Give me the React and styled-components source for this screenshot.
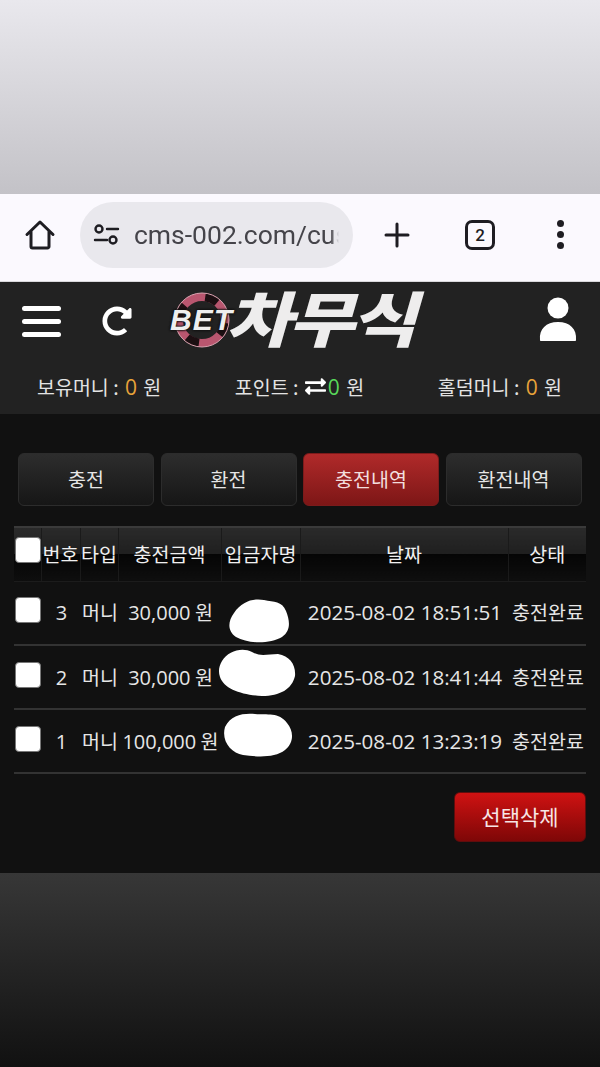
import React from 'react';
import styled, { createGlobalStyle } from 'styled-components';
import { FaExchangeAlt, FaRedoAlt } from 'react-icons/fa';

const korean = '"Noto Sans CJK KR", "Noto Sans", sans-serif';
const latin = '"Open Sans", "Noto Sans CJK KR", sans-serif';

const rows = [
  { id: 3, amount: '30,000', date: '2025-08-02 18:51:51', blob: 'M6 14C14 2 26 -1 36 1C46 3 54 2 58 12C62 22 63 32 54 38C42 45 20 45 8 38C-1 32 0 22 6 14Z', w: 62, h: 44, left: 7, top: -14 },
  { id: 2, amount: '30,000', date: '2025-08-02 18:41:44', blob: 'M4 12C10 2 24 -2 34 3C42 8 50 5 60 5C72 7 78 16 77 27C74 40 62 47 44 47C24 46 6 40 2 28C0 22 1 17 4 12Z', w: 78, h: 48, left: -3, top: -28 },
  { id: 1, amount: '100,000', date: '2025-08-02 13:23:19', blob: 'M2 14C8 2 20 0 32 1C44 2 56 -1 64 10C71 18 71 30 62 37C52 45 34 44 20 42C8 40 -2 28 2 14Z', w: 70, h: 44, left: 2, top: -28 },
];

const App = () => {
  return (
    <Page>
      <GlobalStyle />
      <TopBlank />
      <BrowserBar>
        <ChromeIcon viewBox="0 0 32 32" $size={32}>
          <path d="M3 15.500 16 3l13 12.500M7 12v15.500a1.500 1.500 0 0 0 1.500 1.500h15a1.500 1.500 0 0 0 1.500-1.500V12" />
        </ChromeIcon>
        <UrlPill>
          <ChromeIcon viewBox="0 0 28 24" $size={28} $thin>
            <circle cx="6" cy="6" r="3.500" />
            <path d="M14 6h11M2 17h12" />
            <circle cx="20" cy="17" r="3.500" />
          </ChromeIcon>
          <UrlText>cms-002.com/cus</UrlText>
        </UrlPill>
        <ChromeIcon viewBox="0 0 28 28" $size={28}>
          <path d="M14 3v22M3 14h22" />
        </ChromeIcon>
        <TabCount>2</TabCount>
        <MoreDots>
          <i /><i /><i />
        </MoreDots>
      </BrowserBar>

      <Header>
        <TopRow>
          <Burger><i /><i /><i /></Burger>
          <RefreshButton><FaRedoAlt /></RefreshButton>
          <Logo>
            <Chip viewBox="0 0 60 60">
              <circle cx="30" cy="30" r="23" fill="none" stroke="#b9566f" strokeWidth="8" />
              <circle cx="30" cy="30" r="23" fill="none" stroke="#1c0f12" strokeWidth="8" strokeDasharray="13 23" strokeDashoffset="-3" />
              <circle cx="30" cy="30" r="27" fill="none" stroke="#d9a3b0" strokeWidth="1" />
            </Chip>
            <BetText>BET</BetText>
            <LogoName>차무식</LogoName>
          </Logo>
          <UserIcon viewBox="0 0 38 44">
            <circle cx="19" cy="11" r="10.500" />
            <path d="M1 43c-1-11 6-18 18-18s19 7 18 18c0 .6-.4 1-1 1H2c-.6 0-1-.4-1-1Z" />
          </UserIcon>
        </TopRow>
        <BalanceRow>
          <Balance>보유머니 : <Amount $color="#e8a23a">0</Amount> 원</Balance>
          <Balance>포인트 : <ExchangeIcon><FaExchangeAlt /></ExchangeIcon> <Amount $color="#58d85a">0</Amount> 원</Balance>
          <Balance>홀덤머니 : <Amount $color="#e8a23a">0</Amount> 원</Balance>
        </BalanceRow>
      </Header>

      <Content>
        <Tabs>
          <Tab>충전</Tab>
          <Tab>환전</Tab>
          <Tab $active>충전내역</Tab>
          <Tab>환전내역</Tab>
        </Tabs>

        <Table>
          <colgroup>
            <col width="27" />
            <col width="39" />
            <col width="38" />
            <col width="103" />
            <col width="79" />
            <col width="208" />
            <col width="78" />
          </colgroup>
          <thead>
            <tr>
              <HeadCell $flush><CheckBox $head /></HeadCell>
              <HeadCell>번호</HeadCell>
              <HeadCell>타입</HeadCell>
              <HeadCell>충전금액</HeadCell>
              <HeadCell>입금자명</HeadCell>
              <HeadCell>날짜</HeadCell>
              <HeadCell>상태</HeadCell>
            </tr>
          </thead>
          <tbody>
            {rows.map((row) => {
              return (
                <tr key={row.id}>
                  <Cell $flush><CheckBox /></Cell>
                  <Cell><Num>{row.id}</Num></Cell>
                  <Cell>머니</Cell>
                  <Cell><Num>{row.amount}</Num> 원</Cell>
                  <DepositorCell>
                    <Blob viewBox={`0 0 ${row.w} ${row.h}`} $w={row.w} $h={row.h} $left={row.left} $top={row.top}>
                      <path d={row.blob} />
                    </Blob>
                  </DepositorCell>
                  <Cell><Num $date>{row.date}</Num></Cell>
                  <Cell>충전완료</Cell>
                </tr>
              );
            })}
          </tbody>
        </Table>

        <Actions>
          <DeleteButton>선택삭제</DeleteButton>
        </Actions>
      </Content>

      <Footer />
    </Page>
  );
};

export default App;

const GlobalStyle = createGlobalStyle`
  html, body {
    margin: 0;
    padding: 0;
    background: #111;
  }
  * {
    box-sizing: border-box;
  }
`;

const Page = styled.div`
  width: 600px;
  height: 1067px;
  overflow: hidden;
  display: flex;
  flex-direction: column;
  font-family: ${korean};
`;

const TopBlank = styled.div`
  height: 194px;
  background: linear-gradient(#e9e8ed, #c3c2c7);
`;

const BrowserBar = styled.div`
  height: 88px;
  background: #fbf9fe;
  display: flex;
  align-items: center;
  padding: 0 0 6px 24px;
  border-bottom: 1px solid #d9d8dc;
`;

const ChromeIcon = styled.svg`
  width: ${(props) => props.$size}px;
  height: ${(props) => props.$size}px;
  flex: none;
  fill: none;
  stroke: #1e1d22;
  stroke-width: ${(props) => (props.$thin ? 2.4 : 3)};
  stroke-linecap: round;
  stroke-linejoin: round;

  &:nth-child(3) {
    margin-left: 30px;
  }
`;

const UrlPill = styled.div`
  width: 273px;
  height: 66px;
  margin-left: 24px;
  flex: none;
  border-radius: 33px;
  background: #e9e8ed;
  display: flex;
  align-items: center;
  padding: 0 14px 0 13px;
  gap: 13px;
  overflow: hidden;
`;

const UrlText = styled.span`
  font-family: Roboto, sans-serif;
  font-size: 26.500px;
  color: #45444a;
  white-space: nowrap;
  overflow: hidden;
  -webkit-mask-image: linear-gradient(to right, #000 96%, transparent);
`;

const TabCount = styled.div`
  width: 30px;
  height: 30px;
  margin-left: 54px;
  border: 3px solid #1e1d22;
  border-radius: 7px;
  display: flex;
  align-items: center;
  justify-content: center;
  font-family: Roboto, sans-serif;
  font-size: 17px;
  font-weight: 500;
  color: #1e1d22;
`;

const MoreDots = styled.div`
  margin-left: 62px;
  display: flex;
  flex-direction: column;
  gap: 4px;

  i {
    display: block;
    width: 7px;
    height: 7px;
    border-radius: 50%;
    background: #1e1d22;
  }
`;

const Header = styled.header`
  height: 132px;
  background: #222;
  display: flex;
  flex-direction: column;
`;

const TopRow = styled.div`
  height: 78px;
  display: flex;
  align-items: center;
  padding: 0 23px 0 22px;
`;

const Burger = styled.div`
  width: 39px;
  display: flex;
  flex-direction: column;
  gap: 8px;

  i {
    display: block;
    height: 5px;
    border-radius: 3px;
    background: #fff;
  }
`;

const RefreshButton = styled.div`
  margin-left: 41px;
  width: 30px;
  height: 30px;
  color: #fff;
  font-size: 30px;
  display: flex;
  align-items: center;
  justify-content: center;
`;

const Logo = styled.div`
  position: relative;
  margin-left: 39px;
  width: 250px;
  height: 60px;
`;

const Chip = styled.svg`
  position: absolute;
  left: 1px;
  top: -1px;
  width: 60px;
  height: 60px;
`;

const BetText = styled.span`
  position: absolute;
  left: -1px;
  top: 12px;
  font-family: "Liberation Sans", sans-serif;
  font-size: 30px;
  line-height: 34px;
  font-weight: 700;
  font-style: italic;
  letter-spacing: 1px;
  color: #eee;
  text-shadow: 0 0 2px #111, 0 0 2px #111, 0 0 3px #111;
`;

const LogoName = styled.span`
  position: absolute;
  left: 62px;
  top: -5px;
  font-family: ${korean};
  font-size: 60px;
  line-height: 60px;
  font-weight: 900;
  letter-spacing: -3px;
  color: #eeeded;
  transform: skewX(-16deg) scaleX(1.2);
  transform-origin: left center;
  white-space: nowrap;
`;

const UserIcon = styled.svg`
  width: 38px;
  height: 44px;
  margin-left: auto;
  margin-top: -5px;
  fill: #fff;
`;

const BalanceRow = styled.div`
  flex: 1;
  display: flex;
  align-items: center;
  justify-content: space-between;
  padding: 0 38px 1px 37px;
`;

const Balance = styled.div`
  font-size: 19.500px;
  color: #e3e3e3;
  white-space: pre;
  display: flex;
  align-items: center;
`;

const Amount = styled.span`
  font-family: ${latin};
  font-size: 21px;
  margin: 0 2px;
  color: ${(props) => props.$color};
`;

const ExchangeIcon = styled.span`
  display: inline-flex;
  font-size: 21px;
  margin-left: 2px;
  color: #fff;
`;

const Content = styled.main`
  height: 459px;
  background: #111;
  padding: 39px 14px 0;
`;

const Tabs = styled.div`
  display: grid;
  grid-template-columns: repeat(4, 136px);
  column-gap: 6.500px;
  margin: 0 4px 20px;
`;

const Tab = styled.div`
  height: 53px;
  border-radius: 6px;
  border: 1px solid ${(props) => (props.$active ? '#7c1b1b' : '#2c2c2c')};
  background: ${(props) => (props.$active
    ? 'linear-gradient(#b02a2a, #7d1616)'
    : 'linear-gradient(#2d2d2d, #161616)')};
  color: ${(props) => (props.$active ? '#f3dede' : '#e6e6e6')};
  font-size: 19.500px;
  padding-bottom: 3px;
  display: flex;
  align-items: center;
  justify-content: center;
`;

const Table = styled.table`
  width: 572px;
  table-layout: fixed;
  border-collapse: collapse;
  border-spacing: 0;
`;

const HeadCell = styled.th`
  height: 54px;
  padding: 0 0 2px;
  font-size: 19.500px;
  font-weight: 400;
  color: #f0f0f0;
  white-space: nowrap;
  text-align: ${(props) => (props.$flush ? 'left' : 'center')};
  border-top: 2px solid #3a3a3a;
  border-bottom: 1px solid #1c1c1c;
  border-right: 1px solid #1a1a1a;
  background: linear-gradient(#2a2a2a 0, #1f1f1f 50%, #050505 50%, #0e0e0e 100%);

  &:last-child {
    border-right: 0;
  }
`;

const Cell = styled.td`
  height: 64px;
  padding: 0 0 2px ${(props) => (props.$flush ? '0' : '2px')};
  font-size: 19.500px;
  color: #e6e6e6;
  white-space: nowrap;
  text-align: ${(props) => (props.$flush ? 'left' : 'center')};
  border-bottom: 2px solid #333;
`;

const DepositorCell = styled(Cell)`
  position: relative;
`;

const Blob = styled.svg`
  position: absolute;
  left: ${(props) => props.$left}px;
  top: calc(50% + ${(props) => props.$top}px);
  width: ${(props) => props.$w}px;
  height: ${(props) => props.$h}px;
  fill: #fff;
  overflow: visible;
`;

const Num = styled.span`
  font-family: ${latin};
  font-size: ${(props) => (props.$date ? '20.600px' : '20px')};
`;

const CheckBox = styled.span`
  display: inline-block;
  vertical-align: middle;
  width: 26px;
  height: 26px;
  margin-left: 1px;
  margin-top: ${(props) => (props.$head ? '-12px' : '-9px')};
  border: 1px solid #777;
  border-radius: 4px;
  background: #fff;
`;

const Actions = styled.div`
  display: flex;
  justify-content: flex-end;
  padding-top: 18px;
`;

const DeleteButton = styled.div`
  width: 132px;
  height: 50px;
  border-radius: 6px;
  border: 1px solid #5f0d0d;
  background: linear-gradient(#cf1212, #7e0707);
  color: #f7e6e6;
  font-size: 21px;
  padding-bottom: 3px;
  display: flex;
  align-items: center;
  justify-content: center;
`;

const Footer = styled.footer`
  flex: 1;
  background: linear-gradient(#373737, #111);
`;
